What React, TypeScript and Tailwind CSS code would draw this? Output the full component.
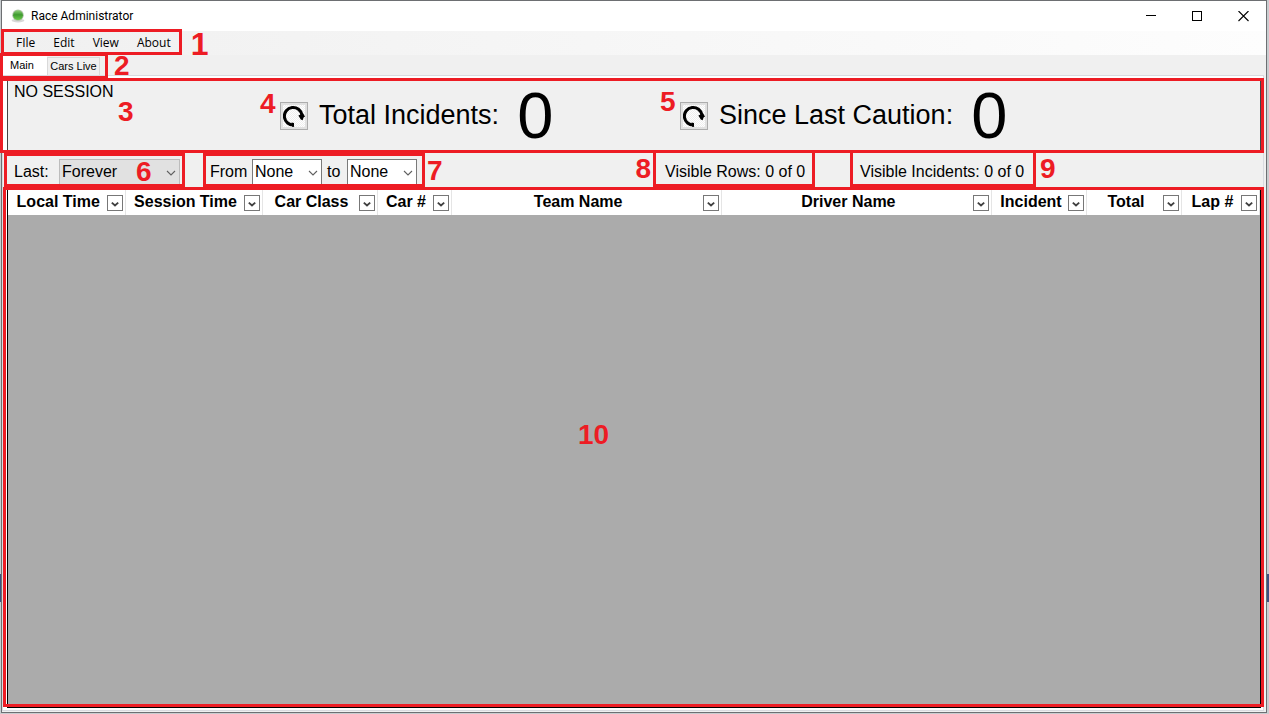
import React from "react";
import clsx from "clsx";

const RED_BOX = "pointer-events-none absolute z-10 border-[3px] border-[#ed1c24]";
const RED_NUMBER =
  "pointer-events-none absolute z-20 text-[28px] leading-8 font-bold text-[#ed1c24]";

function Outline({ className }: { className: string }) {
  return <span aria-hidden="true" className={clsx(RED_BOX, className)} />;
}

function Marker({ n, className }: { n: number; className: string }) {
  return <span className={clsx(RED_NUMBER, className)}>{n}</span>;
}

function AppIcon() {
  return (
    <svg width="16" height="16" viewBox="0 0 16 16" aria-hidden="true">
      <defs>
        <linearGradient id="led" x1="0" y1="0" x2="0" y2="1">
          <stop offset="0" stopColor="#8fd07a" />
          <stop offset="0.45" stopColor="#3f9a2f" />
          <stop offset="1" stopColor="#6ccb4a" />
        </linearGradient>
      </defs>
      <ellipse cx="8" cy="12.6" rx="6.4" ry="1.8" fill="#d8d8d8" />
      <circle cx="8" cy="7.2" r="5.8" fill="#b4c4ae" />
      <circle cx="8" cy="7.2" r="4.9" fill="url(#led)" />
    </svg>
  );
}

function ResetIcon() {
  return (
    <svg width="22" height="22" viewBox="0 0 22 22" aria-hidden="true">
      <path d="M11 20 A8.8 8.8 0 1 1 18.9 10" fill="none" stroke="#000" strokeWidth="3.1" />
      <path d="M8.5 17.5 L11 18 V21.7 H9 Z" fill="#000" />
      <path d="M15.4 10.6 L20 8.2 L22 11.6 L20.6 12.4 L19.6 15.2 L17.8 14.6 Z" fill="#000" />
    </svg>
  );
}

function ResetButton({ label }: { label: string }) {
  return (
    <button
      type="button"
      aria-label={label}
      className="grid size-7 shrink-0 place-items-center border border-[#adadad] bg-[#e1e1e1]"
    >
      <span className="grid size-[22px] place-items-center bg-[repeating-conic-gradient(#ffffff_0_25%,#efefef_0_50%)] bg-size-[2px_2px]">
        <ResetIcon />
      </span>
    </button>
  );
}

function Chevron() {
  return (
    <svg
      className="pointer-events-none absolute top-[10px] right-1"
      width="10"
      height="8"
      viewBox="0 0 10 8"
      fill="none"
      stroke="#606060"
      aria-hidden="true"
    >
      <path d="M1 2 L5 6 L9 2" strokeWidth="1.1" />
    </svg>
  );
}

function Combo({ id, value, className }: { id: string; value: string; className: string }) {
  return (
    <span className="relative flex">
      <select
        id={id}
        className={clsx("h-[26px] appearance-none border pl-[2px] text-base leading-6", className)}
      >
        <option>{value}</option>
      </select>
      <Chevron />
    </span>
  );
}

function Counter({ label, value, children }: { label: string; value: number; children?: React.ReactNode }) {
  return (
    <div className="relative flex items-center">
      <ResetButton label={`Reset ${label}`} />
      <span className="ml-[11px] pb-[2px] text-[27px] leading-8 whitespace-nowrap">{label}:</span>
      <span className="ml-[18px] text-[65px] leading-[72px]">{value}</span>
      {children}
    </div>
  );
}

const COLUMNS = [
  { name: "Local Time", width: "w-[117px]" },
  { name: "Session Time", width: "w-[137px]" },
  { name: "Car Class", width: "w-[115px]" },
  { name: "Car #", width: "w-[74px]" },
  { name: "Team Name", width: "" },
  { name: "Driver Name", width: "" },
  { name: "Incident", width: "w-[95px]" },
  { name: "Total", width: "w-[95px]" },
  { name: "Lap #", width: "w-[78px]" },
];

function TitleBar() {
  return (
    <header className="flex h-[30px] items-center bg-white pl-2 font-[Roboto,sans-serif] text-[12px]">
      <AppIcon />
      <h1 className="ml-[5px] flex-1">Race Administrator</h1>
      <button type="button" aria-label="Minimize" className="grid h-full w-[46px] place-items-center">
        <svg width="11" height="11" stroke="#000" fill="none" shapeRendering="crispEdges">
          <path d="M0 4.5 H10" />
        </svg>
      </button>
      <button type="button" aria-label="Maximize" className="grid h-full w-[46px] place-items-center">
        <svg width="11" height="11" stroke="#000" fill="none" shapeRendering="crispEdges">
          <rect x="0.5" y="0.5" width="9" height="9" />
        </svg>
      </button>
      <button type="button" aria-label="Close" className="grid h-full w-[46px] place-items-center">
        <svg width="11" height="11" stroke="#000" fill="none">
          <path d="M0.5 0 L10.5 10 M10.5 0 L0.5 10" strokeWidth="1.1" />
        </svg>
      </button>
    </header>
  );
}

function MenuBar() {
  return (
    <div className="flex h-6 bg-linear-to-r from-[#f0f0f0] to-[#fdfdfd] font-['Open_Sans',sans-serif] text-[12px]">
      <nav aria-label="Main menu" className="relative flex items-center pl-[5px]">
        {["FIle", "Edit", "View", "About"].map((item) => (
          <button key={item} type="button" className="px-[9px]">
            {item}
          </button>
        ))}
        <Outline className="-top-[2px] -right-[2px] bottom-0 -left-px" />
        <span className="pointer-events-none absolute top-[-3px] left-full z-20 ml-[11px] font-['Liberation_Sans',Arial,sans-serif] text-[32px] leading-8 font-bold text-[#ed1c24]">
          1
        </span>
      </nav>
    </div>
  );
}

function TabStrip() {
  return (
    <div className="flex h-5 text-[11px]">
      <div role="tablist" className="relative flex items-end pl-px">
        <button role="tab" aria-selected="true" type="button" className="h-[19px] w-11 bg-white pr-[6px] pb-px">
          Main
        </button>
        <button
          role="tab"
          aria-selected="false"
          type="button"
          className="h-[18px] w-[53px] border border-b-0 border-[#d9d9d9] bg-[#f0f0f0]"
        >
          Cars Live
        </button>
        <Outline className="-top-[2px] -right-2 -bottom-1 -left-[2px]" />
        <Marker n={2} className="top-[-5px] left-full ml-[14px]" />
      </div>
    </div>
  );
}

function SessionPanel() {
  return (
    <section className="relative mt-[3px] mr-[2px] ml-1 flex h-[74px] items-center border-x border-[#444] bg-[#f0f0f0]">
      <div className="w-[272px] shrink-0 self-start pt-px pl-[6px] text-base leading-6">
        NO SESSION
        <Marker n={3} className="top-[17px] left-[110px]" />
      </div>
      <div className="w-[400px] shrink-0">
        <Counter label="Total Incidents" value={0}>
          <Marker n={4} className="top-2 -left-5" />
        </Counter>
      </div>
      <Counter label="Since Last Caution" value={0}>
        <Marker n={5} className="top-[6px] -left-5" />
      </Counter>
      <Outline className="-top-px -right-1 bottom-0 -left-2" />
    </section>
  );
}

function FilterBar() {
  return (
    <section className="flex h-9 bg-[#f0f0f0] pl-px text-base">
      <div className="relative flex h-[34px] w-[181px] items-center pt-1 pl-[10px]">
        <label htmlFor="last" className="w-[45px]">
          Last:
        </label>
        <Combo id="last" value="Forever" className="w-[121px] border-[#bcbcbc] bg-[#e1e1e1]" />
        <Outline className="inset-0" />
        <Marker n={6} className="top-[3px] left-[132px]" />
      </div>
      <div className="relative ml-[18px] flex h-[34px] w-[222px] items-center pt-1 pl-[7px]">
        <label htmlFor="from" className="w-[42px]">
          From
        </label>
        <Combo id="from" value="None" className="w-[70px] border-[#7a7a7a] bg-white" />
        <label htmlFor="to" className="w-[25px] pl-[5px]">
          to
        </label>
        <Combo id="to" value="None" className="w-[70px] border-[#7a7a7a] bg-white" />
        <Outline className="inset-0" />
        <Marker n={7} className="top-[2px] left-full ml-[2px]" />
      </div>
      <div className="relative ml-[228px] flex h-[34px] w-[162px] items-center pt-[3px] pl-3 whitespace-nowrap">
        Visible Rows: 0 of 0
        <Outline className="-top-[3px] right-0 bottom-0 left-0" />
        <Marker n={8} className="top-0 right-full mr-[2px]" />
      </div>
      <div className="relative ml-[35px] flex h-[34px] w-[186px] items-center pt-[3px] pl-[10px] whitespace-nowrap">
        Visible Incidents: 0 of 0
        <Outline className="-top-[3px] right-0 bottom-0 left-0" />
        <Marker n={9} className="top-0 left-full ml-1" />
      </div>
    </section>
  );
}

function IncidentGrid() {
  return (
    <section className="relative mr-[2px] mb-[2px] ml-1 flex-1 border border-black bg-[#ababab]">
      <table className="w-full table-fixed border-collapse bg-white text-base">
        <thead>
          <tr className="h-[25px]">
            {COLUMNS.map((c) => (
              <th key={c.name} scope="col" className={clsx("border-r border-[#e5e5e5] p-0 pb-[2px]", c.width)}>
                <div className="flex items-center pr-[2px] pl-[2px]">
                  <span className="flex-1 text-center leading-[22px] whitespace-nowrap">{c.name}</span>
                  <button
                    type="button"
                    aria-label={`Filter ${c.name}`}
                    className="mt-[2px] grid size-4 shrink-0 place-items-center border border-[#777] bg-white"
                  >
                    <svg width="10" height="8" viewBox="0 0 10 8" fill="none" stroke="#404040" aria-hidden="true">
                      <path d="M1.8 3.6 L5 6.4 L8.2 3.6" strokeWidth="1.9" />
                    </svg>
                  </button>
                </div>
              </th>
            ))}
          </tr>
        </thead>
      </table>
      <Outline className="-top-[3px] -right-1 bottom-0 -left-[5px]" />
      <Marker n={10} className="top-[229px] left-[570px]" />
    </section>
  );
}

export default function App() {
  return (
    <div className="flex min-h-screen flex-col bg-[linear-gradient(#c9cdd0_574px,#3c4f80_574px,#3c4f80_602px,#c9cdd0_602px)] pr-[2px] pb-px pl-px font-['Liberation_Sans',Arial,sans-serif] text-black">
      <div className="flex flex-1 flex-col border border-[#6d6f72] bg-[#f0f0f0]">
        <TitleBar />
        <MenuBar />
        <TabStrip />
        <main className="mr-[2px] mb-px flex flex-1 flex-col border border-[#d9dbe0] bg-white">
          <SessionPanel />
          <FilterBar />
          <IncidentGrid />
        </main>
      </div>
    </div>
  );
}
